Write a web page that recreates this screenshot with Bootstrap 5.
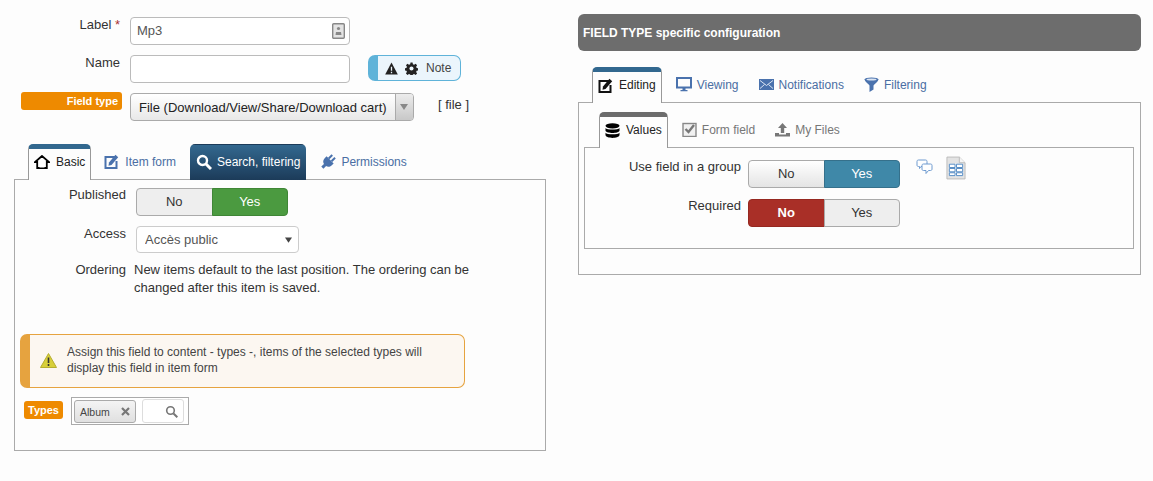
<!DOCTYPE html>
<html lang="en"><head><meta charset="utf-8"><title>Field</title>
<link href="https://cdn.jsdelivr.net/npm/bootstrap@5.3.0/dist/css/bootstrap.min.css" rel="stylesheet">
<style>
html,body{height:100%}
body{background:#fdfdfd;font:13px/18px "Liberation Sans",Arial,sans-serif;color:#333;overflow:hidden}
.page-wrap{padding:17px 12px 0 14px;gap:32px;align-items:flex-start}
.col-l{width:532px;flex:none}
.col-r{width:563px;flex:none;margin-top:-3px}
.lbl{width:106px;text-align:right;margin-right:10px;flex:none;color:#333;margin-top:-1px}
.star{color:#a33}
.frow{margin-bottom:10px}
.txt-in.form-control{width:220px;height:28px;min-height:0;border:1px solid #bbb;border-radius:4px;background:#fff;font:13px "Liberation Sans",sans-serif;color:#555;padding:0 6px 2px}
.in-wrap{position:relative}
.in-ico{position:absolute;right:5px;top:5px;width:13px;height:18px}
.note-box{margin-left:18px;width:93px;height:26px;border:1px solid #5fb3d9;border-left:10px solid #5fb3d9;border-radius:7px;background:#ebf5fc;gap:7px;padding-left:7px;color:#444;font-size:12px}
.note-t{margin-left:1px}
.type-badge.badge{background:#ee8a00;width:101px;height:18px;margin-left:7px;margin-right:8px;text-align:right;padding:0 4px;border-radius:3px;font:bold 11px/18px "Liberation Sans",sans-serif;color:#fff;flex:none;margin-top:-1px}
.chosen-s{width:284px;height:28px;flex:none;border:1px solid #aaa;border-radius:4px;background:linear-gradient(#fff,#e8e8e8);color:#222;overflow:hidden}
.chosen-t{flex:1;padding:0 8px;line-height:27px;font-size:13px;white-space:nowrap}
.chosen-a{width:19px;border-left:1px solid #aaa;background:linear-gradient(#ececec,#c8c8c8)}
.file-tag{margin-left:24px;margin-top:3px;color:#333;font-size:13px}
.tabs-l.nav{border:0;margin:23px 0 -1px 14px;position:relative;z-index:1;gap:0;flex-wrap:nowrap}
.tb.nav-link{height:36px;padding:0 5px;display:flex;align-items:center;gap:6px;font-size:12px;color:#4a6ea3;border:1px solid transparent;border-bottom:0;border-radius:5px 5px 0 0;white-space:nowrap;background:transparent;margin:0}
.tb.on{background:#fdfdfd;color:#222;border-color:#999;border-top:5px solid #32688f}
.tb.gr.on{border-top-color:#6c6c6c}
.tb.dark{background:linear-gradient(#33688f,#1c3b59);color:#fff;gap:5px}
.tb.gray{color:#777}
.tabs-l .tb,.tabs-r .tb,.tabs-i .tb{padding-bottom:2px}
.tabs-r .tb,.tabs-i .tb{gap:5px}
.tabs-l .tb.on,.tabs-r .tb.on,.tabs-i .tb.on{padding-bottom:5px;gap:6px}
.tb-p.nav-link{gap:5px}
.tab-s7{margin-left:7px}
.pane-l{border:1px solid #aaa;height:272px;padding:8px 0 0 0;background:#fdfdfd}
.tlbl{width:111px;text-align:right;margin-right:10px;flex:none}
.up2{margin-top:-2px}
.up1{margin-top:-1px}
.tgl{width:152px;height:28px;flex:none}
.tgl .btn{width:76px;height:28px;padding:0;font-size:13px;line-height:26px;border:1px solid #aaa;--bs-btn-border-radius:4px}
.b-off{background:#eee;color:#333}
.b-lg{background:linear-gradient(#fff,#e4e4e4);color:#333}
.b-gr{background:#4b9a40!important;color:#fff!important;border-color:#3f8636!important}
.b-bl{background:#3f88a8!important;color:#fff!important;border-color:#35708b!important}
.b-rd{background:#a92f27!important;color:#fff!important;border-color:#962820!important;font-weight:bold}
.acc-sel.form-select{width:163px;height:27px;padding:0 8px;font:13px "Liberation Sans",sans-serif;color:#555;border:1px solid #ccc;border-radius:4px;background-color:#fff;background-image:url("data:image/svg+xml,%3Csvg xmlns='http://www.w3.org/2000/svg' viewBox='0 0 8 6'%3E%3Cpath d='M0 0h8L4 6z' fill='%23444'/%3E%3C/svg%3E");background-size:7px 6px;background-position:right 6px center}
.ord-txt{width:345px;margin-left:-2px;color:#333}
.warn-box.alert{margin:37px 0 0 5px;width:445px;height:54px;padding:0 10px 2px 10px;border:1px solid #e6a33f;border-left:10px solid #e6a33f;border-radius:7px;background:#fcf7f1;color:#444;font-size:12px;line-height:16px;gap:10px}
.types-row{margin:9px 0 0 9px}
.ty-badge.badge{background:#ee8a00;width:39px;height:18px;padding:0;border-radius:3px;font:bold 11px/18px "Liberation Sans",sans-serif;margin-right:8px;color:#fff;margin-top:4px}
.ty-box{width:118px;height:28px;border:1px solid #aaa;padding:1px 2px;gap:6px;background:#fff}
.chip{width:62px;height:23px;margin-top:1px;border:1px solid #aaa;border-radius:3px;background:linear-gradient(#f4f4f4,#e0e0e0);font-size:10.5px;padding:0 5px;color:#444;justify-content:space-between}
.srch{width:42px;height:24px;border:1px solid #ddd;border-radius:3px;background:#fff;justify-content:flex-end;padding-right:5px}
.hdr{height:37px;background:#6d6d6d;border-radius:6px;color:#fff;font-weight:bold;font-size:12px;line-height:38px;padding-left:5px;margin-bottom:16px}
.tabs-r.nav{border:0;margin:0 0 -1px 14px;position:relative;z-index:1;flex-wrap:nowrap}
.pane-r{border:1px solid #aaa;height:173px;padding:9px 6px 0 5px}
.tabs-i.nav{border:0;margin:0 0 -1px 15px;position:relative;z-index:1;flex-wrap:nowrap}
.pane-i{border:1px solid #aaa;height:102px;padding:12px 0 0 0}
.irow{margin-bottom:11px}
.ilbl{width:156px;margin-right:7px;text-align:right;flex:none;margin-top:-2px}
.ico-gap{margin-left:13px}
.ico-n1{margin-top:-1px}
.ico-n2{margin-top:-4px}
.ty-mt{margin-top:10px}
.ord-mt{margin-top:8px}
</style></head><body>
<div class="page-wrap d-flex">
<div class="col-l">
  <div class="d-flex frow">
    <label class="lbl">Label <span class="star">*</span></label>
    <div class="in-wrap"><input class="form-control txt-in" value="Mp3">
      <svg class="in-ico" viewBox="0 0 13 18"><rect x=".7" y="1.7" width="11.6" height="14.6" rx="1" fill="#e4e4e4" stroke="#888" stroke-width="1.4"/><circle cx="6.5" cy="6.5" r="1.6" fill="#888"/><path d="M3.5 13l.5-3h5l.5 3z" fill="#888"/></svg></div>
  </div>
  <div class="d-flex frow">
    <label class="lbl">Name</label>
    <input class="form-control txt-in">
    <div class="note-box d-flex align-items-center">
      <svg width="13" height="13" viewBox="0 0 14 14"><path d="M7 .5L13.8 13.5H.2z" fill="#222"/><path d="M6.3 5h1.4v4.500H6.300zM6.300 10.500h1.400V12H6.300z" fill="#ebf5fc"/></svg>
      <svg width="13" height="13" viewBox="0 0 14 14"><path d="M5.800 0h2.400l.4 2 1.400.6 1.800-1.100 1.700 1.700-1.100 1.800.6 1.400 2 .4v2.400l-2 .4-.6 1.400 1.100 1.800-1.700 1.700-1.800-1.100-1.400.6-.4 2H5.800l-.4-2-1.400-.6-1.800 1.100L.5 12.700l1.100-1.800L1 9.500l-2-.4V6.700l2-.4.6-1.400L.5 3.200l1.700-1.700L4 2.600l1.400-.6z" transform="translate(.6 .6) scale(.92)" fill="#222"/><circle cx="7" cy="7" r="2.200" fill="#ebf5fc"/></svg>
      <span class="note-t">Note</span>
    </div>
  </div>
  <div class="d-flex align-items-start">
    <span class="badge type-badge">Field type</span>
    <div class="chosen-s d-flex"><div class="chosen-t">File (Download/View/Share/Download cart)</div>
      <div class="chosen-a d-flex align-items-center justify-content-center"><svg width="8" height="6" viewBox="0 0 8 6"><path d="M0 0h8L4 6z" fill="#888"/></svg></div></div>
    <span class="file-tag">[ file ]</span>
  </div>
  <ul class="nav nav-tabs tabs-l">
    <li class="nav-item"><a class="nav-link tb on" href="#"><svg width="16" height="14" viewBox="0 0 16 14"><path d="M8 1L1 7h2.200v6h9.600V7H15z" fill="none" stroke="#000" stroke-width="1.800"/><path d="M5.500 9h5v3.500h-5z" fill="#fff"/></svg>Basic</a></li>
    <li class="nav-item tab-s7"><a class="nav-link tb" href="#"><svg width="15" height="15" viewBox="0 0 15 15"><path d="M11 3H1.500v11h11V7" fill="none" stroke="#4a72ad" stroke-width="2"/><path d="M5 8.500L11.500.8l2.700 2.400L7.500 11l-3 .8z" fill="#4a72ad"/></svg>Item form</a></li>
    <li class="nav-item ms-2"><a class="nav-link tb dark" href="#"><svg width="16" height="16" viewBox="0 0 16 16"><circle cx="6.500" cy="6.500" r="4.500" fill="none" stroke="#fff" stroke-width="2.400"/><path d="M10 10l5 5" stroke="#fff" stroke-width="3"/></svg>Search, filtering</a></li>
    <li class="nav-item ms-2"><a class="nav-link tb tb-p" href="#"><svg width="16" height="16" viewBox="0 0 16 16"><g transform="rotate(45 8 8)" fill="#4a72ad"><rect x="5" y="0" width="2" height="5"/><rect x="9" y="0" width="2" height="5"/><path d="M3 5h10v3c0 2.500-2 4-3.500 4.200V16h-3v-3.800C5 12 3 10.500 3 8z"/></g></svg>Permissions</a></li>
  </ul>
  <div class="pane-l">
    <div class="d-flex">
      <span class="tlbl up2">Published</span>
      <div class="btn-group tgl"><button class="btn b-off">No</button><button class="btn b-gr">Yes</button></div>
    </div>
    <div class="d-flex ty-mt">
      <span class="tlbl up1">Access</span>
      <select class="form-select acc-sel"><option>Accès public</option></select>
    </div>
    <div class="d-flex ord-mt">
      <span class="tlbl">Ordering</span>
      <div class="ord-txt">New items default to the last position. The ordering can be changed after this item is saved.</div>
    </div>
    <div class="alert warn-box d-flex align-items-center">
      <svg width="17" height="15" viewBox="0 0 17 15" class="flex-shrink-0"><path d="M8.500.5L16.500 14.500H.5z" fill="#d8cf3a" stroke="#b5ad30" stroke-linejoin="round"/><path d="M7.700 4.500h1.600v5.500H7.700zM7.700 11h1.600v2H7.700z" fill="#333"/></svg>
      <div>Assign this field to content - types -, items of the selected types will display this field in item form</div>
    </div>
    <div class="types-row d-flex align-items-start">
      <span class="badge ty-badge">Types</span>
      <div class="ty-box d-flex">
        <div class="chip d-flex align-items-center">Album <svg width="9" height="9" viewBox="0 0 9 9"><path d="M1 1l7 7M8 1L1 8" stroke="#777" stroke-width="2.200"/></svg></div>
        <div class="srch d-flex align-items-center"><svg width="13" height="13" viewBox="0 0 13 13"><circle cx="5.500" cy="5.500" r="3.800" fill="none" stroke="#777" stroke-width="1.600"/><path d="M8.500 8.500l3.800 3.800" stroke="#777" stroke-width="2"/></svg></div>
      </div>
    </div>
  </div>
</div>
<div class="col-r">
  <div class="hdr">FIELD TYPE specific configuration</div>
  <ul class="nav nav-tabs tabs-r">
    <li class="nav-item"><a class="nav-link tb on" href="#"><svg width="15" height="15" viewBox="0 0 15 15"><path d="M11 3H1.500v11h11V7" fill="none" stroke="#111" stroke-width="2"/><path d="M5 8.500L11.500.8l2.700 2.400L7.500 11l-3 .8z" fill="#111"/></svg>Editing</a></li>
    <li class="nav-item ms-2"><a class="nav-link tb" href="#"><svg width="16" height="15" viewBox="0 0 16 15"><rect x="1" y="1" width="14" height="9.500" fill="none" stroke="#4a72ad" stroke-width="2"/><path d="M6.500 10.500h3V13h2v1.200h-7V13h2z" fill="#4a72ad"/></svg>Viewing</a></li>
    <li class="nav-item ms-2"><a class="nav-link tb" href="#"><svg width="15" height="11" viewBox="0 0 15 11"><rect width="15" height="11" fill="#4a72ad"/><path d="M1 1.500l6.500 5 6.500-5M1 9.500l4.500-4M14 9.500l-4.500-4" fill="none" stroke="#dbe5f3"/></svg>Notifications</a></li>
    <li class="nav-item ms-2"><a class="nav-link tb" href="#"><svg width="15" height="15" viewBox="0 0 15 15"><ellipse cx="7.500" cy="2.500" rx="7" ry="2" fill="#4a72ad"/><path d="M.5 2.500c1 3 4 4.500 5 6V15l4-2.500V8.500c1-1.500 4-3 5-6z" fill="#4a72ad"/><ellipse cx="7.500" cy="2.500" rx="5" ry="1" fill="#dbe5f3"/></svg>Filtering</a></li>
  </ul>
  <div class="pane-r">
    <ul class="nav nav-tabs tabs-i">
      <li class="nav-item"><a class="nav-link tb on gr" href="#"><svg width="15" height="15" viewBox="0 0 15 15"><ellipse cx="7.500" cy="2.800" rx="7" ry="2.600" fill="#000"/><path d="M.5 5c1 2 13 2 14 0v2.700c-1 3-13 3-14 0zM.5 9.800c1 2 13 2 14 0v2.500c-1 3.500-13 3.500-14 0z" fill="#000"/></svg>Values</a></li>
      <li class="nav-item ms-2"><a class="nav-link tb gray" href="#"><svg width="15" height="15" viewBox="0 0 15 15"><rect x="1" y="1.500" width="13" height="13" fill="#f1f1f1" stroke="#888" stroke-width="1.400"/><path d="M3.500 7l3 3 5.500-7" fill="none" stroke="#777" stroke-width="2.400"/></svg>Form field</a></li>
      <li class="nav-item ms-2"><a class="nav-link tb gray" href="#"><svg width="15" height="14" viewBox="0 0 15 14"><path d="M7.500 0L12 5H9.200v5H5.800V5H3z" fill="#777"/><path d="M0 10h4v1.500h7V10h4v3.500H0z" fill="#777"/></svg>My Files</a></li>
    </ul>
    <div class="pane-i">
      <div class="d-flex irow">
        <span class="ilbl">Use field in a group</span>
        <div class="btn-group tgl"><button class="btn b-lg">No</button><button class="btn b-bl">Yes</button></div>
        <svg class="ms-3 ico-n1" width="17" height="17" viewBox="0 0 17 17"><path d="M2.500 1h7c1 0 1.500.6 1.500 1.500V6c0 1-.6 1.500-1.500 1.500H5L3.500 9.500V7.500h-1C1.500 7.500 1 7 1 6V2.500C1 1.600 1.500 1 2.500 1z" fill="#fff" stroke="#6f9bd0"/><path d="M7.500 5h7c1 0 1.500.6 1.500 1.500V10c0 1-.6 1.500-1.500 1.500h-2l-2.500 3v-3h-2.500C6.500 11.500 6 11 6 10V6.500C6 5.600 6.500 5 7.500 5z" fill="#fff" stroke="#6f9bd0"/></svg>
        <svg class="ico-gap ico-n2" width="20" height="24" viewBox="0 0 21 24"><path d="M1 .5h13l6 6v17H1z" fill="#e3e3e3" stroke="#bbb"/><path d="M14 .5v6h6" fill="#f5f5f5" stroke="#bbb"/><path d="M3 7.500h15v13H3z" fill="#fff"/><path d="M3.500 8h6v3.500h-6zM11 8h6.500v3.500H11zM3.500 12.500h6V16h-6zM11 12.500h6.500V16H11zM3.500 17h6v3h-6zM11 17h6.500v3H11z" fill="none" stroke="#4f87c2"/></svg>
      </div>
      <div class="d-flex">
        <span class="ilbl">Required</span>
        <div class="btn-group tgl"><button class="btn b-rd">No</button><button class="btn b-off">Yes</button></div>
      </div>
    </div>
  </div>
</div>
</div>
<script src="https://cdn.jsdelivr.net/npm/bootstrap@5.3.0/dist/js/bootstrap.bundle.min.js"></script>
</body></html>
